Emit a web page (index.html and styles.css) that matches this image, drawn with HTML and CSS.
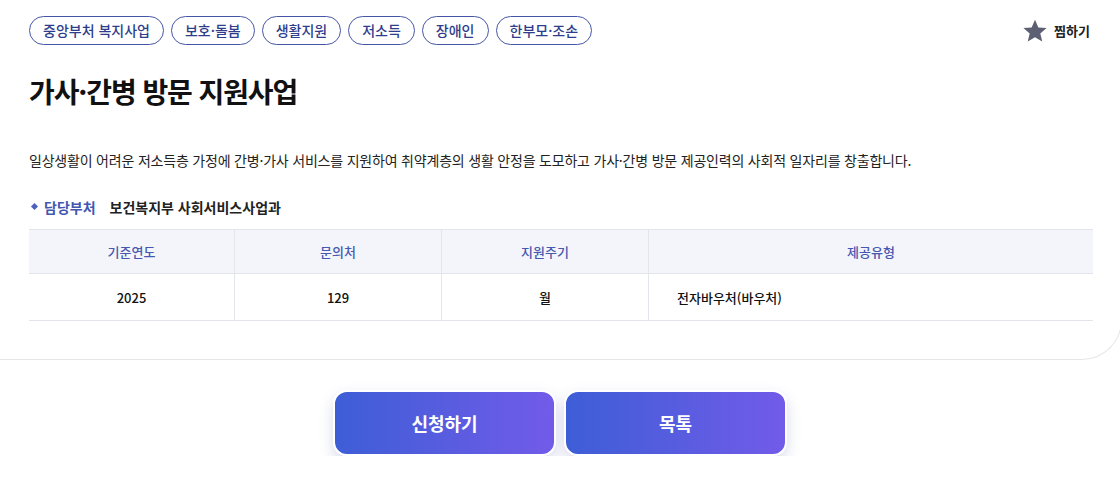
FILE: index.html
```html
<!DOCTYPE html>
<html lang="ko">
<head>
    <meta charset="UTF-8">
    <meta name="viewport" content="width=device-width, initial-scale=1.0">
    <title>가사·간병 방문 지원사업</title>
    <link rel="stylesheet" href="styles.css">
</head>
<body>
    <div class="card">
        <div class="top-row">
            <ul class="tags">
                <li>중앙부처 복지사업</li>
                <li>보호·돌봄</li>
                <li>생활지원</li>
                <li>저소득</li>
                <li>장애인</li>
                <li>한부모·조손</li>
            </ul>
            <button class="fav">
                <svg width="26" height="26" viewBox="0 0 24 24"><path d="M12 1.5l3.1 7.2 7.6.6-5.8 5 1.8 7.5L12 17.8l-6.7 4 1.8-7.5-5.8-5 7.6-.6z" fill="#5d6073"/></svg>
                찜하기
            </button>
        </div>

        <h1>가사·간병 방문 지원사업</h1>

        <p class="desc">일상생활이 어려운 저소득층 가정에 간병·가사 서비스를 지원하여 취약계층의 생활 안정을 도모하고 가사·간병 방문 제공인력의 사회적 일자리를 창출합니다.</p>

        <div class="dept">
            <span class="dept-label">담당부처</span>
            <span class="dept-name">보건복지부 사회서비스사업과</span>
        </div>

        <table class="info">
            <thead>
                <tr>
                    <th class="c1">기준연도</th>
                    <th class="c2">문의처</th>
                    <th class="c3">지원주기</th>
                    <th>제공유형</th>
                </tr>
            </thead>
            <tbody>
                <tr>
                    <td>2025</td>
                    <td>129</td>
                    <td>월</td>
                    <td class="left">전자바우처(바우처)</td>
                </tr>
            </tbody>
        </table>
    </div>

    <div class="actions">
        <button class="btn">신청하기</button>
        <button class="btn">목톡</button>
    </div>
</body>
</html>
```

FILE: styles.css
```css
body {
    margin: 0;
    background-color: #ffffff;
    font-family: "Noto Sans CJK KR", "Noto Sans", sans-serif;
    color: #222;
}
.card {
    padding: 16px 28px 38px 29px;
    border-bottom: 1px solid #e6e6e9;
    border-right: 1px solid #e6e6e9;
    border-bottom-right-radius: 40px;
    margin-right: -2px;
}
.top-row {
    display: flex;
    justify-content: space-between;
    align-items: center;
}
.tags {
    display: flex;
    gap: 7px;
    list-style: none;
    margin: 0;
    padding: 0;
}
.tags li {
    height: 27px;
    line-height: 27px;
    padding: 0 13px;
    border: 1px solid #4656a6;
    border-radius: 15px;
    color: #2e3d8c;
    font-size: 14px;
    font-weight: 500;
}
.fav {
    display: flex;
    align-items: center;
    gap: 6px;
    border: none;
    background: none;
    padding: 0;
    font-family: inherit;
    font-size: 13px;
    font-weight: 700;
    color: #222;
    margin-right: 3px;
}
h1 {
    margin: 26px 0 0;
    font-size: 28px;
    font-weight: 700;
    color: #111;
    letter-spacing: -1.1px;
}
.desc {
    margin: 39px 0 0;
    font-size: 14px;
    color: #222;
    letter-spacing: -0.2px;
}
.dept {
    margin-top: 27px;
    font-size: 14px;
    font-weight: 700;
    display: flex;
    align-items: center;
}
.dept-label {
    color: #4356b0;
    position: relative;
    padding-left: 15px;
    margin-right: 14px;
}
.dept-label::before {
    content: "";
    position: absolute;
    left: 3px;
    top: 50%;
    width: 5px;
    height: 5px;
    margin-top: -3px;
    background: #4d5fc0;
    transform: rotate(45deg);
}
.dept-name {
    color: #222;
}
.info {
    width: 100%;
    border-collapse: collapse;
    margin-top: 12px;
    font-size: 13px;
}
.info th, .info td {
    border-bottom: 1px solid #e3e5ea;
    text-align: center;
}
.info th + th, .info td + td {
    border-left: 1px solid #e3e5ea;
}
.info thead tr {
    border-top: 1px solid #e3e5ea;
}
.info th {
    background-color: #f3f5fa;
    color: #4658b0;
    font-weight: 500;
    height: 41px;
}
.info td {
    height: 44px;
    font-weight: 500;
    color: #111;
}
.info .c1 { width: 203px; }
.info .c2 { width: 204px; }
.info .c3 { width: 204px; }
.info td.left {
    text-align: left;
    padding-left: 28px;
}
.actions {
    display: flex;
    justify-content: center;
    gap: 8px;
    margin-top: 30px;
}
.btn {
    width: 223px;
    height: 66px;
    border: 2px solid #ffffff;
    border-radius: 14px;
    background: linear-gradient(90deg, #3d5ed6, #725be9);
    box-shadow: 0 6px 14px rgba(80, 90, 170, 0.22);
    color: #ffffff;
    font-family: inherit;
    font-size: 18px;
    font-weight: 700;
}
```
